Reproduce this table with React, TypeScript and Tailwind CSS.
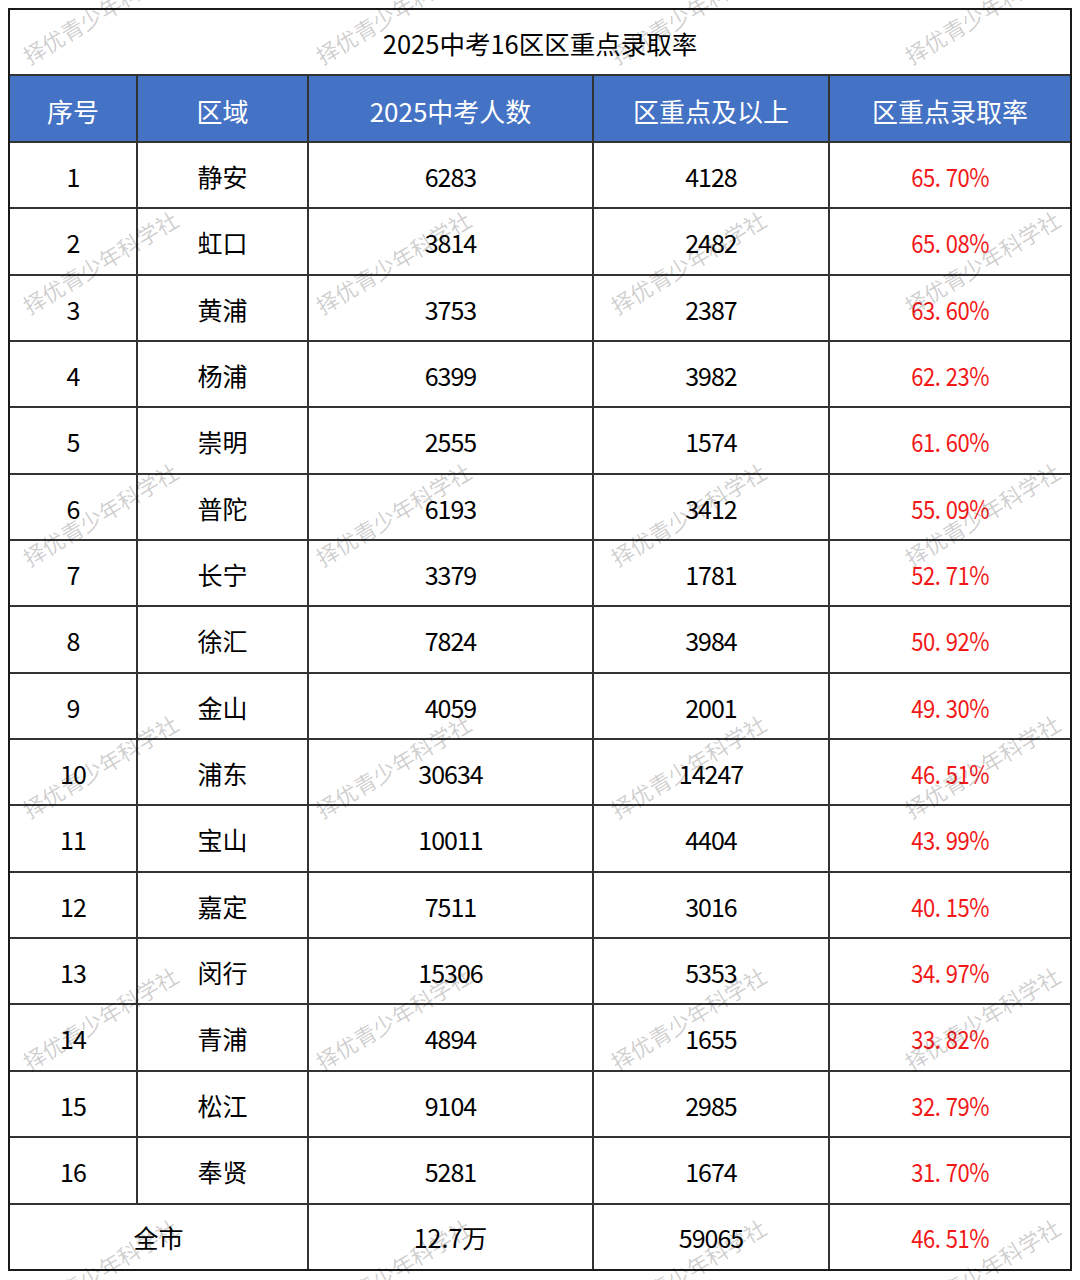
import React from "react";

const rows: [string, string, string, string, string][] = [
  ["1", "静安", "6283", "4128", "65.70%"],
  ["2", "虹口", "3814", "2482", "65.08%"],
  ["3", "黄浦", "3753", "2387", "63.60%"],
  ["4", "杨浦", "6399", "3982", "62.23%"],
  ["5", "崇明", "2555", "1574", "61.60%"],
  ["6", "普陀", "6193", "3412", "55.09%"],
  ["7", "长宁", "3379", "1781", "52.71%"],
  ["8", "徐汇", "7824", "3984", "50.92%"],
  ["9", "金山", "4059", "2001", "49.30%"],
  ["10", "浦东", "30634", "14247", "46.51%"],
  ["11", "宝山", "10011", "4404", "43.99%"],
  ["12", "嘉定", "7511", "3016", "40.15%"],
  ["13", "闵行", "15306", "5353", "34.97%"],
  ["14", "青浦", "4894", "1655", "33.82%"],
  ["15", "松江", "9104", "2985", "32.79%"],
  ["16", "奉贤", "5281", "1674", "31.70%"],
];

const headers = ["序号", "区域", "2025中考人数", "区重点及以上", "区重点录取率"];

// watermark centres, one grid of repeated stamps
const markXs = [100, 393, 688, 982];
const markYs = [12, 262, 514, 766, 1018, 1270];

function Rate({ value }: { value: string }) {
  const [a, b] = value.split(".");
  return (
    <span className="inline-block scale-x-[0.88] text-[#f21818] tracking-[-0.5px]">
      {a}
      <span className="mr-[6px]">.</span>
      {b}
    </span>
  );
}

export default function App() {
  const cell = "bg-white flex items-center justify-center h-[64.35px] pt-[3px] text-[25px] text-black";
  const num = `${cell} tracking-[-1px]`;
  return (
    <div
      className="relative w-[1080px] h-[1280px] bg-white overflow-hidden"
      style={{ fontFamily: '"Noto Sans CJK SC", "Noto Sans", sans-serif' }}
    >
      <div className="absolute left-[8px] top-[8px] w-[1064px] border-2 border-[#1a1a1a] bg-[#333] grid grid-cols-[126px_169px_283px_234px_240px] gap-[2px]">
        {/* title */}
        <div className="col-span-5 bg-white h-[64px] pt-[2px] flex items-center justify-center text-[25.5px] text-black">
          2025中考16区区重点录取率
        </div>

        {/* header */}
        {headers.map((h) => (
          <div key={h} className="bg-[#4472c4] h-[65px] pt-[3px] flex items-center justify-center text-[26px] text-white">
            {h}
          </div>
        ))}

        {/* data rows */}
        {rows.map((r) => (
          <React.Fragment key={r[0]}>
            <div className={num}>{r[0]}</div>
            <div className={cell}>{r[1]}</div>
            <div className={num}>{r[2]}</div>
            <div className={num}>{r[3]}</div>
            <div className={cell}>
              <Rate value={r[4]} />
            </div>
          </React.Fragment>
        ))}

        {/* total */}
        <div className={`${cell} col-span-2`}>全市</div>
        <div className={cell}>12.7万</div>
        <div className={num}>59065</div>
        <div className={cell}>
          <Rate value="46.51%" />
        </div>
      </div>

      {/* watermark overlay */}
      <div className="absolute inset-0 pointer-events-none">
        {markYs.map((y) =>
          markXs.map((x) => (
            <div
              key={`${x}-${y}`}
              className="absolute whitespace-nowrap text-[22px] text-black/20 -translate-x-1/2 -translate-y-1/2 -rotate-[31deg]"
              style={{ left: x, top: y }}
            >
              择优青少年科学社
            </div>
          ))
        )}
      </div>
    </div>
  );
}
